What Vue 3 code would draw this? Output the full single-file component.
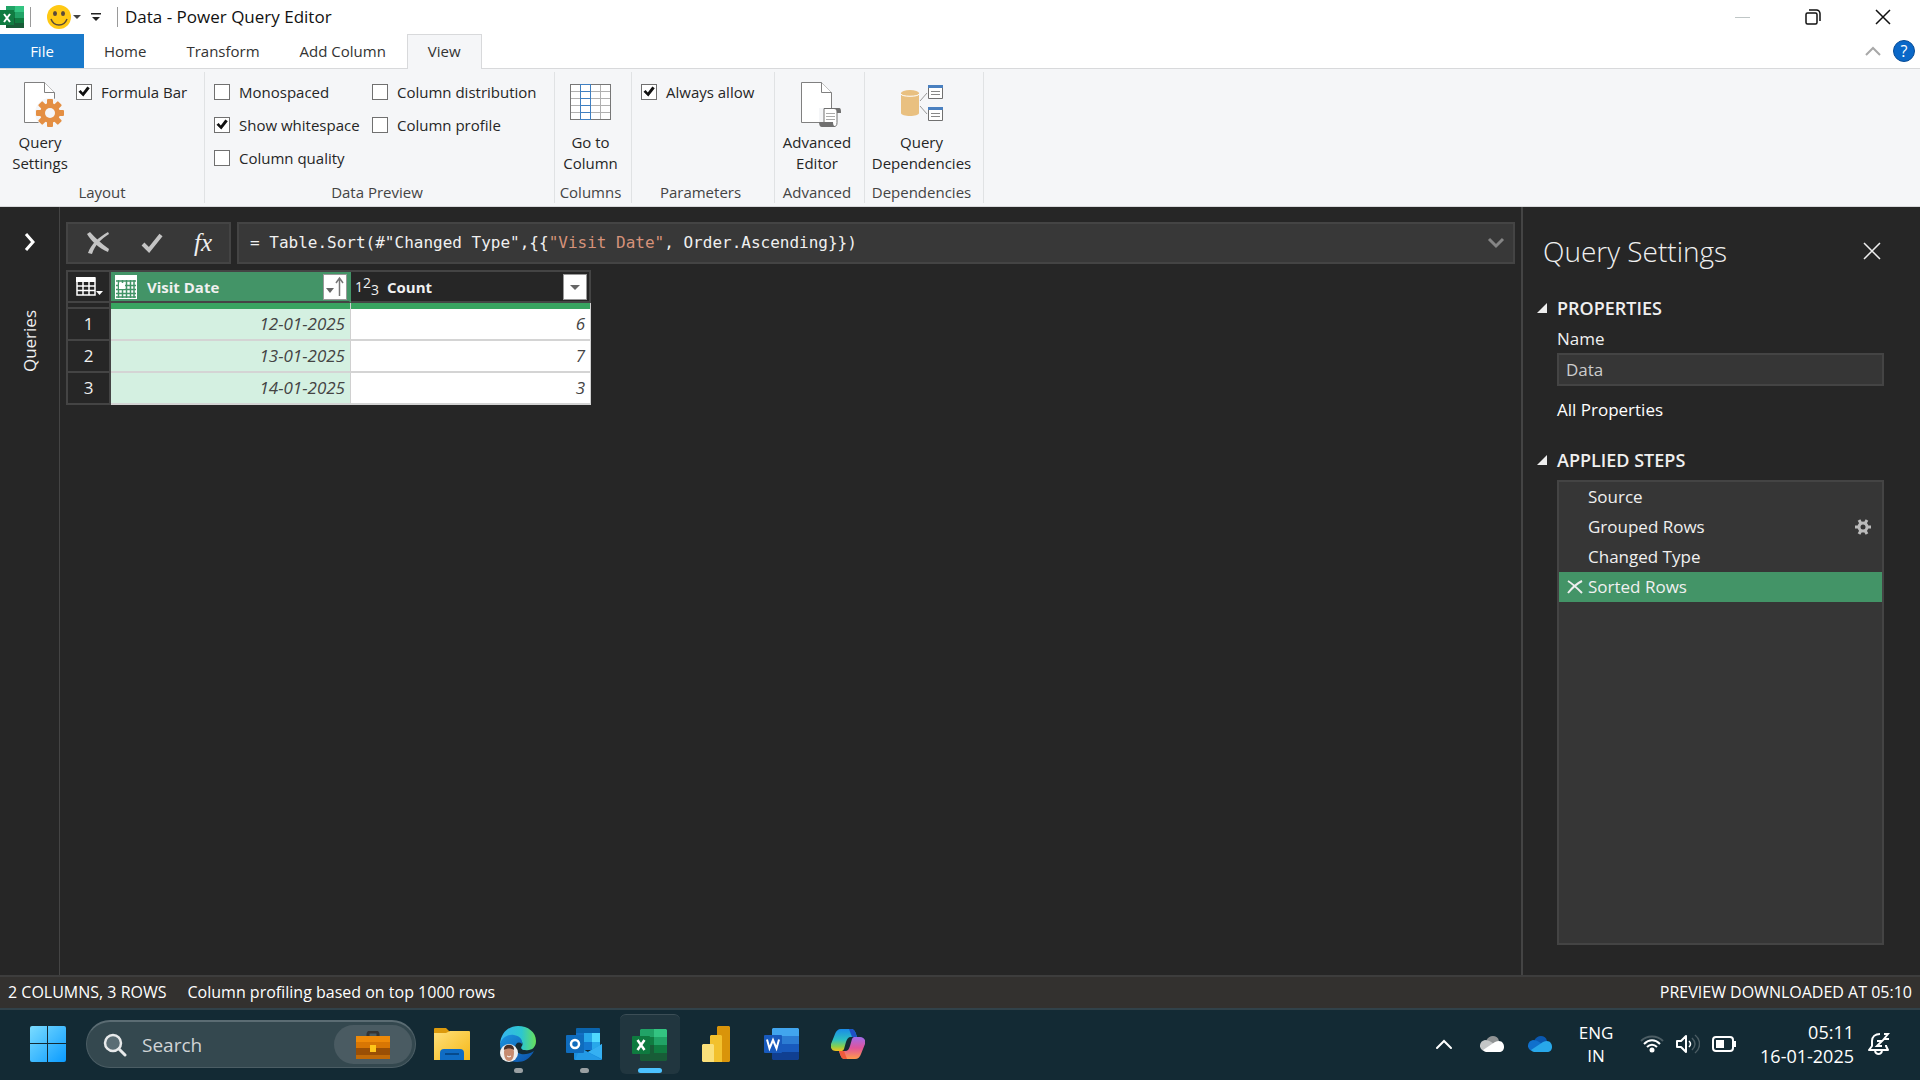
<script setup>
import { ref } from 'vue'

const tabs = ['Home', 'Transform', 'Add Column']
const previewLeft = ref([
  { label: 'Monospaced', on: false },
  { label: 'Show whitespace', on: true },
  { label: 'Column quality', on: false },
])
const previewRight = ref([
  { label: 'Column distribution', on: false },
  { label: 'Column profile', on: false },
])
const formulaBar = ref(true)
const alwaysAllow = ref(true)
const queryName = ref('Data')
const rows = [
  { date: '12-01-2025', count: 6 },
  { date: '13-01-2025', count: 7 },
  { date: '14-01-2025', count: 3 },
]
const steps = [
  { name: 'Source' },
  { name: 'Grouped Rows', gear: true },
  { name: 'Changed Type' },
  { name: 'Sorted Rows', selected: true },
]
const teeth = [0, 45, 90, 135]
const smallTeeth = [0, 60, 120]
</script>

<template>
  <div class="screen">
    <header class="titlebar">
      <svg class="excel-mini" width="24" height="24" viewBox="0 0 24 24" aria-hidden="true">
        <path d="M6 1h9v6H6z" fill="#21a366" /><path d="M15 1h9v6h-9z" fill="#33c481" />
        <path d="M6 7h9v6H6z" fill="#107c41" /><path d="M15 7h9v6h-9z" fill="#21a366" />
        <path d="M6 13h9v10H6z" fill="#185c37" /><path d="M15 13h9v5h-9z" fill="#107c41" /><path d="M15 18h9v5h-9z" fill="#185c37" />
        <rect x="0" y="5" width="14" height="15" fill="#107c41" />
        <path d="M4 9l6 8M10 9l-6 8" stroke="#fff" stroke-width="2" />
      </svg>
      <span class="bar"></span>
      <button class="plain smile" aria-label="Send feedback">
        <svg width="36" height="26" viewBox="0 0 36 26">
          <circle cx="13" cy="13" r="12" fill="#ffc914" />
          <ellipse cx="9" cy="9.500" rx="2" ry="2.500" fill="#5a4a3a" /><ellipse cx="17" cy="9.500" rx="2" ry="2.500" fill="#5a4a3a" />
          <path d="M5 15c3 8 13 8 16 0" fill="none" stroke="#5a4a3a" stroke-width="1.500" />
          <path d="M27 11h8l-4 4z" fill="#444" />
        </svg>
      </button>
      <button class="plain qat" aria-label="Customize Quick Access Toolbar">
        <svg width="10" height="10" viewBox="0 0 10 10"><path d="M0 1h10v1.500H0zM1 5h8L5 9z" fill="#222" /></svg>
      </button>
      <span class="bar"></span>
      <h1>Data - Power Query Editor</h1>
      <div class="win">
        <button class="plain" aria-label="Minimize"><svg width="16" height="16" viewBox="0 0 16 16"><path d="M0 8.500h15" stroke="#bfc6c6" /></svg></button>
        <button class="plain" aria-label="Restore"><svg width="16" height="16" viewBox="0 0 16 16" fill="none" stroke="#111" stroke-width="1.500"><rect x="1" y="4" width="11" height="11" rx="1.500" /><path d="M4 1h7.500a3.500 3.500 0 0 1 3.500 3.500V12" /></svg></button>
        <button class="plain" aria-label="Close"><svg width="16" height="16" viewBox="0 0 16 16"><path d="M1 1l14 14M15 1L1 15" stroke="#111" stroke-width="1.500" /></svg></button>
      </div>
    </header>

    <nav class="tabs">
      <button class="tab file">File</button>
      <button v-for="t in tabs" :key="t" class="tab">{{ t }}</button>
      <button class="tab active">View</button>
      <div class="tab-end">
        <button class="plain" aria-label="Collapse ribbon"><svg width="16" height="10" viewBox="0 0 16 10"><path d="M1 9l7-7 7 7" fill="none" stroke="#a8a8a8" stroke-width="2" /></svg></button>
        <button class="plain help" aria-label="Help">?</button>
      </div>
    </nav>

    <section class="ribbon">
      <div class="group g-layout">
        <div class="body">
          <button class="big">
            <svg width="48" height="48" viewBox="0 0 48 48">
              <path d="M8.500 2.500h20l10 10v30h-30z" fill="#fff" stroke="#808080" />
              <path d="M28.500 2.500v10h10" fill="#fff" stroke="#808080" />
              <circle cx="34" cy="33" r="15" fill="#f5f6f8" />
              <rect v-for="a in teeth" :key="a" x="31" y="19" width="6" height="28" rx="1" fill="#e48f43" :transform="`rotate(${a} 34 33)`" />
              <circle cx="34" cy="33" r="10" fill="#e48f43" /><circle cx="34" cy="33" r="5" fill="#f5f6f8" />
            </svg>
            <span>Query<br />Settings</span>
          </button>
          <div class="checks">
            <label><input v-model="formulaBar" type="checkbox" />Formula Bar</label>
          </div>
        </div>
        <div class="caption">Layout</div>
      </div>
      <div class="group g-preview">
        <div class="body">
          <div class="checks wide">
            <label v-for="c in previewLeft" :key="c.label"><input v-model="c.on" type="checkbox" />{{ c.label }}</label>
          </div>
          <div class="checks">
            <label v-for="c in previewRight" :key="c.label"><input v-model="c.on" type="checkbox" />{{ c.label }}</label>
          </div>
        </div>
        <div class="caption">Data Preview</div>
      </div>
      <div class="group g-columns">
        <div class="body">
          <button class="big">
            <svg width="48" height="48" viewBox="0 0 48 48">
              <rect x="4.500" y="4.500" width="40" height="35" fill="#fff" />
              <path d="M4 11.500h41M4 18.500h41M4 25.500h41M4 32.500h41M34.500 4v36" stroke="#b0b0b0" />
              <rect x="4.500" y="4.500" width="40" height="35" fill="none" stroke="#777" />
              <path d="M14.500 4v36M24.500 4v36M14 4.500h11M14 11.500h11M14 18.500h11M14 25.500h11M14 32.500h11M14 39.500h11" stroke="#3f7fc1" />
            </svg>
            <span>Go to<br />Column</span>
          </button>
        </div>
        <div class="caption">Columns</div>
      </div>
      <div class="group g-params">
        <div class="body">
          <div class="checks"><label><input v-model="alwaysAllow" type="checkbox" />Always allow</label></div>
        </div>
        <div class="caption">Parameters</div>
      </div>
      <div class="group g-advanced">
        <div class="body">
          <button class="big">
            <svg width="48" height="48" viewBox="0 0 48 48">
              <path d="M8.500 2.500h20l10 10v30h-30z" fill="#fff" stroke="#808080" />
              <path d="M28.500 2.500v10h10" fill="#fff" stroke="#808080" />
              <path d="M26 28h22v19H26z" fill="#f5f6f8" />
              <path d="M31 28.500h13v14c0 3-1 4-3 4H29c2 0 2-2 2-4z" fill="#fff" stroke="#707070" />
              <path d="M32 28h14c2 0 2 2 2 5h-4c0-3-1-4-3-4h-9zM26 42h14c0 3 1 4 2 5H29c-2 0-3-2-3-5z" fill="#707070" />
              <path d="M33 33.500h9M33 36.500h9M33 39.500h9" stroke="#aaa" />
            </svg>
            <span>Advanced<br />Editor</span>
          </button>
        </div>
        <div class="caption">Advanced</div>
      </div>
      <div class="group g-deps">
        <div class="body">
          <button class="big">
            <svg width="48" height="48" viewBox="0 0 48 48">
              <path d="M4 13v20c0 4 18 4 18 0V13z" fill="#e9c080" /><ellipse cx="13" cy="13" rx="9" ry="3" fill="#e9c080" />
              <path d="M4 14c0 3 18 3 18 0" fill="none" stroke="#fff" />
              <path d="M23 21l7-8M23 26l7 8" stroke="#999" />
              <path d="M31.500 5.500h14v13h-14zM31.500 27.500h14v13h-14z" fill="#fff" stroke="#707070" />
              <path d="M31 5h15v3H31zM31 27h15v3H31z" fill="#4a80c0" />
              <path d="M34 11.500h9M34 14.500h9M34 33.500h9M34 36.500h9" stroke="#888" />
            </svg>
            <span>Query<br />Dependencies</span>
          </button>
        </div>
        <div class="caption">Dependencies</div>
      </div>
    </section>

    <main class="work">
      <aside class="rail">
        <button class="plain" aria-label="Expand queries"><svg width="14" height="20" viewBox="0 0 14 20"><path d="M3 2l7 8-7 8" fill="none" stroke="#fff" stroke-width="3" /></svg></button>
        <span class="rail-text">Queries</span>
      </aside>

      <section class="center">
        <div class="formula">
          <div class="fx-box">
            <button class="plain" aria-label="Cancel"><svg width="24" height="22" viewBox="0 0 24 22"><path d="M1 2l3-2c5 6 11 11 19 17l-1 3C13 16 6 10 1 2zM23 2C15 7 9 13 6 22L2 21C5 12 13 5 22 0z" fill="#c4c4c4" /></svg></button>
            <button class="plain" aria-label="Commit"><svg width="22" height="20" viewBox="0 0 22 20"><path d="M2 11l6 6L20 2" fill="none" stroke="#c4c4c4" stroke-width="4" /></svg></button>
            <button class="plain fx" aria-label="Insert step">fx</button>
          </div>
          <div class="code">
            <code>= Table.Sort(#"Changed Type",{{ '\u007b\u007b' }}<span class="str">"Visit Date"</span>, Order.Ascending<span>{{ '\u007d\u007d' }}</span>)</code>
            <button class="plain" aria-label="Expand formula bar"><svg width="18" height="12" viewBox="0 0 18 12"><path d="M2 2l7 7 7-7" fill="none" stroke="#858585" stroke-width="3" /></svg></button>
          </div>
        </div>

        <table class="grid">
          <thead>
            <tr>
              <th class="corner">
                <svg width="28" height="20" viewBox="0 0 28 20"><path d="M0 0h19v5H0z" fill="#fff" /><path d="M1 1h18v17H1zM1 9h18M1 13.500h18M7 5v13M13 5v13" fill="none" stroke="#fff" stroke-width="1.500" /><path d="M20 14h7l-3.500 4z" fill="#fff" /></svg>
              </th>
              <th class="sel">
                <div class="head">
                  <svg width="22" height="24" viewBox="0 0 22 24"><path d="M0 0h22v24H0z" fill="#fff" /><path d="M1 6h20M1 10.500h20M1 14.500h20M1 18.500h20M3.500 5v18M7.500 5v18M11.500 5v18M15.500 5v18M19 5v18M1 22h20" stroke="#439467" stroke-width="1.500" /><path d="M4 8h6v6H4z" fill="#fff" /></svg>
                  <span>Visit Date</span>
                  <button class="drop" aria-label="Visit Date filter"><svg width="20" height="22" viewBox="0 0 20 22"><path d="M1 12h8l-4 5z" fill="#666" /><path d="M14.500 20V2M11 7l3.500-5L18 7" fill="none" stroke="#777" stroke-width="1.500" /></svg></button>
                </div>
              </th>
              <th>
                <div class="head">
                  <span class="num"><i>1</i><i class="up">2</i><i class="down">3</i></span>
                  <span>Count</span>
                  <button class="drop" aria-label="Count filter"><svg width="20" height="20" viewBox="0 0 20 20"><path d="M5 8h10l-5 5z" fill="#666" /></svg></button>
                </div>
              </th>
            </tr>
            <tr class="quality"><td class="idx"></td><td></td><td></td></tr>
          </thead>
          <tbody>
            <tr v-for="(r, i) in rows" :key="r.date">
              <th class="idx">{{ i + 1 }}</th>
              <td class="picked">{{ r.date }}</td>
              <td>{{ r.count }}</td>
            </tr>
          </tbody>
        </table>
      </section>

      <aside class="settings">
        <div class="settings-head">
          <h2>Query Settings</h2>
          <button class="plain" aria-label="Close pane"><svg width="18" height="18" viewBox="0 0 18 18"><path d="M1 1l16 16M17 1L1 17" stroke="#eee" stroke-width="1.500" /></svg></button>
        </div>
        <h3><svg width="10" height="10" viewBox="0 0 10 10"><path d="M10 0v10H0z" fill="#eee" /></svg>PROPERTIES</h3>
        <div class="props">
          <label for="qname">Name</label>
          <input id="qname" v-model="queryName" type="text" />
          <a href="#">All Properties</a>
        </div>
        <h3><svg width="10" height="10" viewBox="0 0 10 10"><path d="M10 0v10H0z" fill="#eee" /></svg>APPLIED STEPS</h3>
        <ul class="steps">
          <li v-for="s in steps" :key="s.name" :class="{ on: s.selected }">
            <span class="mark"><svg v-if="s.selected" width="16" height="16" viewBox="0 0 16 16"><path d="M1 2c5 3 9 7 14 12M15 2C9 5 5 9 1 14" fill="none" stroke="#eee" stroke-width="2" /></svg></span>
            <span class="name">{{ s.name }}</span>
            <svg v-if="s.gear" width="16" height="16" viewBox="0 0 16 16">
              <rect v-for="a in smallTeeth" :key="a" x="0" y="6.500" width="16" height="3" fill="#bbb" :transform="`rotate(${a} 8 8)`" />
              <circle cx="8" cy="8" r="5.500" fill="#bbb" /><circle cx="8" cy="8" r="2.500" fill="#363636" />
            </svg>
          </li>
        </ul>
      </aside>
    </main>

    <footer class="status">
      <span>2 COLUMNS, 3 ROWS</span>
      <span>Column profiling based on top 1000 rows</span>
      <span class="end">PREVIEW DOWNLOADED AT 05:10</span>
    </footer>

    <div class="taskbar">
      <button class="task" aria-label="Start">
        <svg width="36" height="36" viewBox="0 0 36 36">
          <defs><linearGradient id="win" x1="0" y1="0" x2="1" y2="1" gradientUnits="objectBoundingBox"><stop offset="0" stop-color="#7bdcff" /><stop offset="1" stop-color="#0a9bff" /></linearGradient></defs>
          <path d="M2 0h15v17H0V2a2 2 0 0 1 2-2zM18 0h16a2 2 0 0 1 2 2v15H18zM0 18h17v18H2a2 2 0 0 1-2-2zM18 18h18v16a2 2 0 0 1-2 2H18z" fill="url(#win)" />
        </svg>
      </button>
      <label class="search">
        <svg width="24" height="24" viewBox="0 0 24 24"><circle cx="10" cy="10" r="8" fill="#5a6d74" stroke="#e8eaeb" stroke-width="2.500" /><path d="M16 16l6 6" stroke="#e8eaeb" stroke-width="3" stroke-linecap="round" /></svg>
        <input type="text" placeholder="Search" />
        <span class="brief">
          <svg width="34" height="28" viewBox="0 0 34 28">
            <path d="M12 6V3c0-1 1-2 2-2h6c1 0 2 1 2 2v3" fill="none" stroke="#333" stroke-width="3" />
            <rect y="5" width="34" height="23" rx="1" fill="#9a4f05" /><path d="M0 5h34v12H0z" fill="#ee8a09" /><path d="M0 11h34v6H0z" fill="#d87604" /><path d="M0 24h34v4H0z" fill="#c06a08" />
            <rect x="14" y="14" width="6" height="7" fill="#ffc61a" />
          </svg>
        </span>
      </label>
      <button class="task" aria-label="File Explorer">
        <svg width="36" height="34" viewBox="0 0 36 34">
          <defs><linearGradient id="fold" x1="0" y1="0" x2="1" y2="1"><stop offset="0" stop-color="#ffe07a" /><stop offset="1" stop-color="#f5b818" /></linearGradient></defs>
          <path d="M0 8V2a1 1 0 0 1 1-1h11l4 4v5H0z" fill="#dc9a0c" /><path d="M0 6h12l4-2h19a1 1 0 0 1 1 1v28H0z" fill="url(#fold)" />
          <path d="M6 33v-7a4 4 0 0 1 4-4h16a4 4 0 0 1 4 4v7z" fill="#0f6cc4" /><path d="M11 27h14" stroke="#064a8c" stroke-width="2" />
        </svg>
      </button>
      <button class="task run" aria-label="Microsoft Edge">
        <svg width="36" height="36" viewBox="0 0 36 36">
          <defs>
            <linearGradient id="e1" x1="0" y1="0" x2="1" y2="0"><stop offset="0" stop-color="#35b4f0" /><stop offset=".6" stop-color="#2dc6cf" /><stop offset="1" stop-color="#68e05a" /></linearGradient>
            <linearGradient id="e2" x1="0" y1="0" x2="1" y2="1"><stop offset="0" stop-color="#1b95e0" /><stop offset="1" stop-color="#0c4fa8" /></linearGradient>
          </defs>
          <path d="M0 18C1 6 9 0 18 0c10 0 18 6 18 15 0 7-5 10-11 9-3 0-5-2-3-4 2-4-2-8-8-9C8 10 3 13 0 18z" fill="url(#e1)" />
          <path d="M0 18c2-7 8-10 14-9 6 1 9 5 8 9-3-3-7-1-7 4 0 6 10 9 19 3-4 8-10 11-17 11C7 36 0 28 0 18z" fill="url(#e2)" />
          <circle cx="9" cy="27" r="9" fill="#eee" />
          <path d="M4 26c0-6 10-6 10 0 0 6-2 9-5 9s-5-3-5-9z" fill="#c68b70" /><path d="M4 24c-1-7 11-7 10 0-3-2-7-2-10 0z" fill="#4a3028" /><path d="M7 30q2 2 4 0" stroke="#fff" fill="none" />
        </svg>
      </button>
      <button class="task run" aria-label="Outlook">
        <svg width="36" height="34" viewBox="0 0 36 34">
          <path d="M11 1h22a1 1 0 0 1 1 1v18H10V2a1 1 0 0 1 1-1z" fill="#0a64ad" /><path d="M10 6h8v9h-8z" fill="#1470c4" /><path d="M18 6h8v9h-8z" fill="#28a8ea" /><path d="M26 6h8v9h-8z" fill="#50d9ff" /><path d="M18 15h8v8h-8z" fill="#1378d0" /><path d="M26 15h8v6l-8 2z" fill="#28a8ea" />
          <path d="M8 17l14 8 14-8v15a1 1 0 0 1-1 1H9a1 1 0 0 1-1-1z" fill="#1a8fe0" /><path d="M36 17v15L22 25z" fill="#35b0f2" /><path d="M9 33l27 0L14 21z" fill="#2aa2ea" opacity=".6" />
          <rect y="8" width="18" height="18" rx="1" fill="#0f6cbd" /><circle cx="9" cy="17" r="4" fill="none" stroke="#fff" stroke-width="2.500" />
        </svg>
      </button>
      <button class="task current" aria-label="Excel">
        <svg width="36" height="34" viewBox="0 0 36 34">
          <path d="M9 1h13v8H8V2z" fill="#21a366" /><path d="M22 1h12l1 1v7H22z" fill="#33c481" /><path d="M8 9h14v8H8z" fill="#107c41" /><path d="M22 9h13v8H22z" fill="#21a366" /><path d="M8 17h14v8H8z" fill="#185c37" /><path d="M22 17h13v8H22z" fill="#107c41" /><path d="M8 25h27v7l-1 1H9l-1-1z" fill="#185c37" />
          <rect y="8" width="18" height="18" rx="1" fill="#0e7a3f" /><path d="M5.500 12l7 10M12.500 12l-7 10" stroke="#fff" stroke-width="2.500" />
        </svg>
      </button>
      <button class="task" aria-label="Power BI">
        <svg width="28" height="36" viewBox="0 0 28 36">
          <path d="M15 1l1-1h11l1 1v34l-1 1H15z" fill="#d9940a" /><path d="M8 10l1-1h10l1 1v26H8z" fill="#f2c12e" /><path d="M0 19l1-1h10l1 1v17H1l-1-1z" fill="#fae07a" />
        </svg>
      </button>
      <button class="task" aria-label="Word">
        <svg width="36" height="34" viewBox="0 0 36 34">
          <path d="M9 1h25l1 1v7H8V2z" fill="#41a5ee" /><path d="M8 9h27v8H8z" fill="#2b7cd3" /><path d="M8 17h27v8H8z" fill="#185abd" /><path d="M8 25h27v7l-1 1H9l-1-1z" fill="#103f91" />
          <rect y="8" width="18" height="18" rx="1" fill="#185abd" /><path d="M3 12.500l2.500 9L9 13l3.500 8.500 2.500-9" fill="none" stroke="#fff" stroke-width="2" />
        </svg>
      </button>
      <button class="task" aria-label="Copilot">
        <svg width="34" height="32" viewBox="0 0 34 32">
          <defs>
            <linearGradient id="c1" x1="0" y1="0" x2="0" y2="1"><stop offset="0" stop-color="#1a8be8" /><stop offset=".5" stop-color="#2dc0c0" /><stop offset=".8" stop-color="#8ccf4a" /><stop offset="1" stop-color="#f5c01c" /></linearGradient>
            <linearGradient id="c2" x1="0" y1="0" x2="0" y2="1"><stop offset="0" stop-color="#a06bea" /><stop offset=".5" stop-color="#e0549a" /><stop offset="1" stop-color="#ff9a4a" /></linearGradient>
          </defs>
          <path d="M10 1h10c3 0 4 2 5 5l1 3h-6c-3 0-4 2-5 5l-2 7c-1 2-2 2-3 2H5c-4 0-6-3-5-7L4 6c1-3 3-5 6-5z" fill="url(#c1)" />
          <path d="M18 1h2c3 0 4 2 5 5l1 3h-5z" fill="#1e50c4" />
          <path d="M24 31H14c-3 0-4-2-5-5l-1-3h6c3 0 4-2 5-5l2-7c1-2 2-2 3-2h5c4 0 6 3 5 7l-4 10c-1 3-3 5-6 5z" fill="url(#c2)" />
          <path d="M16 31h-2c-3 0-4-2-5-5l-1-3h5z" fill="#ef5a3c" />
        </svg>
      </button>

      <div class="tray">
        <button class="plain ico" aria-label="Hidden icons"><svg width="18" height="12" viewBox="0 0 18 12"><path d="M2 10l7-7 7 7" fill="none" stroke="#fff" stroke-width="2" stroke-linecap="round" /></svg></button>
        <button class="plain ico" aria-label="OneDrive personal"><svg width="24" height="16" viewBox="0 0 24 16"><path d="M6 5c3-7 12-6 13 0l-7 4z" fill="#909394" /><path d="M5 4c4 0 8 3 10 5L4 15c-6-2-5-10 1-11z" fill="#c4c6c7" /><path d="M3 14L15 6c6-3 9 1 9 5 0 3-2 5-5 5H6c-1 0-2-1-3-2z" fill="#fff" /></svg></button>
        <button class="plain ico" aria-label="OneDrive"><svg width="24" height="16" viewBox="0 0 24 16"><path d="M6 5c3-7 12-6 13 0l-7 4z" fill="#0a58b0" /><path d="M5 4c4 0 8 3 10 5L4 15c-6-2-5-10 1-11z" fill="#1070cc" /><path d="M3 14L15 6c6-3 9 1 9 5 0 3-2 5-5 5H6c-1 0-2-1-3-2z" fill="#28a8ea" /></svg></button>
        <button class="plain lang">ENG<br />IN</button>
        <button class="plain net" aria-label="Network, volume and battery">
          <svg width="24" height="18" viewBox="0 0 24 18" fill="none" stroke-width="2"><path d="M1 6c6-6 16-6 22 0" stroke="#4c5d64" /><path d="M4 9c5-5 11-5 16 0M7 12c3-3 7-3 10 0" stroke="#fff" /><circle cx="12" cy="15" r="2.500" fill="#fff" /></svg>
          <svg width="24" height="20" viewBox="0 0 24 20" fill="none" stroke-width="1.500"><path d="M1 7h4l5-5v16l-5-5H1z" stroke="#fff" stroke-width="2" stroke-linejoin="round" /><path d="M13 7c2 2 2 4 0 6" stroke="#fff" /><path d="M16 4c4 4 4 8 0 12M19 1c6 5 6 13 0 18" stroke="#4c5d64" /></svg>
          <svg width="24" height="16" viewBox="0 0 24 16"><rect x="1" y="1" width="20" height="14" rx="3" fill="none" stroke="#fff" stroke-width="2" /><path d="M4 4h8v8H4zM22 5h2v6h-2z" fill="#fff" /></svg>
        </button>
        <button class="plain clock">05:11<br />16-01-2025</button>
        <button class="plain bell" aria-label="Notifications"><svg width="22" height="24" viewBox="0 0 22 24" fill="none" stroke="#fff" stroke-width="2"><path d="M12 2C7 2 4 5 4 9v5l-3 4h19l-2-4v-1" stroke-linejoin="round" /><path d="M7 19c1 4 6 4 7 0M9 9h5l-5 5h5M16 2h4l-4 5h5" /></svg></button>
      </div>
    </div>
  </div>
</template>

<style>
body { margin: 0; background: #262626; }
</style>

<style scoped>
* { box-sizing: border-box; }
.screen { min-height: 100vh; display: flex; flex-direction: column; font: 15px/20px "Open Sans", "Noto Sans", sans-serif; color: #262626; background: #262626; }
button, input { font: inherit; color: inherit; margin: 0; }
.plain { background: none; border: 0; padding: 0; display: flex; align-items: center; justify-content: center; }
svg { display: block; flex: none; }
h1, h2, h3, ul { margin: 0; padding: 0; font-weight: 400; }

.titlebar { height: 34px; background: #fff; display: flex; align-items: center; }
.bar { width: 1px; height: 20px; background: #9a9a9a; margin-left: 6px; }
.smile { margin-left: 15px; }
.qat { margin: 0 10px 0 9px; }
.titlebar h1 { font-size: 17px; color: #111; margin-left: 7px; }
.win { margin-left: auto; display: flex; padding-right: 2px; }
.win button { width: 70px; height: 34px; }

.tabs { height: 34px; background: #fff; display: flex; }
.tab { background: none; border: 0; padding: 0 20px; color: #333; height: 34px; }
.file { background: #1a7acb; color: #fff; min-width: 84px; }
.active { background: #f5f6f8; border: 1px solid #d8d9db; border-bottom: 0; height: 35px; margin: 0 0 -1px 1px; padding-bottom: 2px; position: relative; }
.tab-end { margin-left: auto; display: flex; align-items: center; gap: 12px; padding-right: 5px; }
.help { width: 22px; height: 22px; border-radius: 50%; background: #0a68c8; color: #fff; font-size: 16px; border: 1px solid #084c96; }

.ribbon { height: 139px; background: #f5f6f8; border: solid #d8d9db; border-width: 1px 0; padding: 3px 0; display: flex; }
.group { border-right: 1px solid #e0e2e4; display: flex; flex-direction: column; padding: 0 5px 1px 0; }
.body { flex: 1; display: flex; justify-content: center; }
.caption { text-align: center; color: #444; }
.big { background: none; border: 0; padding: 8px 0 0; line-height: 21px; display: flex; flex-direction: column; align-items: center; gap: 4px; }
.checks { padding-top: 3px; }
.checks label { display: flex; align-items: center; height: 33px; gap: 9px; white-space: nowrap; }
.checks input { appearance: none; width: 16px; height: 16px; border: 1px solid #707070; background: #fff; display: grid; place-items: center; }
.checks input:checked::before { content: ""; width: 12px; height: 12px; background: #111; clip-path: polygon(4% 52%, 22% 38%, 40% 58%, 78% 8%, 98% 22%, 44% 92%); }
.wide { width: 158px; }
.g-layout { width: 205px; padding-right: 0; }
.g-layout .body { justify-content: flex-start; gap: 4px; padding-left: 8px; }
.g-layout .big { width: 64px; }
.g-preview { width: 350px; }
.g-preview .body, .g-params .body { justify-content: flex-start; padding-left: 9px; }
.g-columns { width: 77px; }
.g-params { width: 143px; }
.g-advanced { width: 90px; }
.g-deps { width: 119px; }

.work { flex: 1; display: flex; color: #f0f0f0; }
.rail { width: 60px; border-right: 1px solid #444; display: flex; flex-direction: column; align-items: center; padding: 25px 0 0 1px; }
.rail-text { writing-mode: vertical-rl; transform: rotate(180deg); margin-top: 58px; font-size: 17px; line-height: 22px; }
.center { flex: 1; padding: 15px 6px 0; min-width: 0; }
.formula { display: flex; gap: 6px; height: 42px; }
.fx-box, .code { background: #383838; border: 2px solid #444; display: flex; align-items: center; }
.fx-box { width: 165px; justify-content: space-between; padding: 0 17px 0 18px; }
.fx { font: italic 25px/30px "Liberation Serif", serif; }
.code { flex: 1; padding: 0 8px 0 11px; justify-content: space-between; }
.code code { font: 16px/22px "DejaVu Sans Mono", "Liberation Mono", monospace; white-space: pre; }
.str { color: #d6927a; }

.grid { margin-top: 6px; border-collapse: separate; border-spacing: 0; width: 525px; table-layout: fixed; border: solid #444; border-width: 2px 0 0 2px; }
.grid th, .grid td { padding: 0; height: 32px; }
.grid thead th { height: 31px; border-bottom: 2px solid #444; border-right: 2px solid #444; text-align: left; }
.grid .corner { width: 43px; }
.corner svg { margin-left: 8px; }
.grid .sel { background: #439467; border-right-color: #439467; }
.head { display: flex; align-items: center; padding: 0 2px 0 4px; gap: 10px; }
.head .drop { margin-left: auto; }
.drop { width: 24px; height: 26px; padding: 0; background: #fff; border: 1px solid #999; display: grid; place-items: center; }
.num { display: flex; align-items: center; width: 22px; height: 26px; font-size: 14px; font-weight: 400; }
.num i { font-style: normal; }
.num .up { padding-bottom: 7px; }
.num .down { padding-top: 7px; }
.grid .quality td { height: 6px; background: #38a460; border-right: 1px solid #d0d0d0; }
.grid tbody td { background: #fff; color: #444; font-size: 17px; font-style: italic; text-align: right; padding-right: 5px; border-right: 1px solid #d0d0d0; border-bottom: 2px solid #d4d4d4; }
.grid tbody .picked { background: #d4f0e1; }
.grid .idx, .grid .quality .idx { background: #262626; border-bottom: 2px solid #444; border-right: 2px solid #444; font-weight: 400; font-size: 17px; text-align: center; }

.settings { width: 399px; border-left: 2px solid #444; padding: 25px 36px 30px 14px; display: flex; flex-direction: column; font-size: 17px; }
.settings-head { display: flex; justify-content: space-between; align-items: center; height: 38px; padding: 0 3px 0 6px; }
.settings h2 { font-size: 28px; font-weight: 300; line-height: 38px; }
.settings h3 { display: flex; align-items: center; gap: 10px; font-size: 18px; font-weight: 600; line-height: 22px; margin-top: 27px; }
.props { margin: 9px 0 0 20px; display: flex; flex-direction: column; line-height: 22px; }
.props input { height: 33px; border: 2px solid #444; background: #363636; padding: 0 7px; margin: 3px 0 13px; color: #ccc; border-radius: 0; width: 100%; }
.props a { color: #fff; text-decoration: none; }
.props + h3 { margin-top: 28px; }
.steps { list-style: none; flex: 1; margin: 9px 0 0 20px; background: #363636; border: 2px solid #444; }
.steps li { display: flex; align-items: center; height: 30px; padding: 0 11px 0 8px; }
.steps .on { background: #439467; }
.mark { width: 21px; }
.name { flex: 1; }

.status { height: 33px; background: #33312f; border-top: 2px solid #3d3d3d; color: #fff; display: flex; align-items: center; gap: 21px; padding: 0 8px 2px; font-size: 16px; }
.end { margin-left: auto; }

.taskbar { height: 72px; background: #132a34; border-top: 2px solid #31424a; display: flex; align-items: center; gap: 6px; padding: 0 30px 2px 18px; color: #fff; }
.task { width: 60px; height: 60px; background: none; border: 0; border-radius: 6px; padding: 0; display: grid; place-items: center; position: relative; flex: none; }
.current { background: #21363f; border-top: 1px solid #3c4e56; }
.run::after, .current::after { content: ""; position: absolute; bottom: 1px; width: 9px; height: 5px; border-radius: 3px; background: #9aa0a3; }
.current::after { width: 24px; background: #4cc2ff; }
.search { width: 330px; height: 48px; margin-left: 2px; border: 1px solid #4b5d64; border-top: 2px solid #5b6c73; border-radius: 24px; background: #34484f; display: flex; align-items: center; padding: 0 3px 0 16px; gap: 15px; }
.search input { flex: 1; min-width: 0; background: none; border: 0; padding: 0; font-size: 19px; outline: 0; }
.search input::placeholder { color: #d0d4d6; opacity: 1; }
.brief { width: 78px; height: 39px; border-radius: 20px; background: #4a5b62; display: grid; place-items: center; }
.tray { margin-left: auto; display: flex; align-items: center; font-size: 18px; }
.ico { width: 48px; height: 48px; }
.lang { width: 64px; line-height: 23px; font-size: 17px; }
.net { gap: 12px; margin-left: 12px; }
.clock { width: 104px; margin-left: 14px; line-height: 24px; text-align: right; justify-content: flex-end; }
.bell { margin-left: 14px; }
</style>
